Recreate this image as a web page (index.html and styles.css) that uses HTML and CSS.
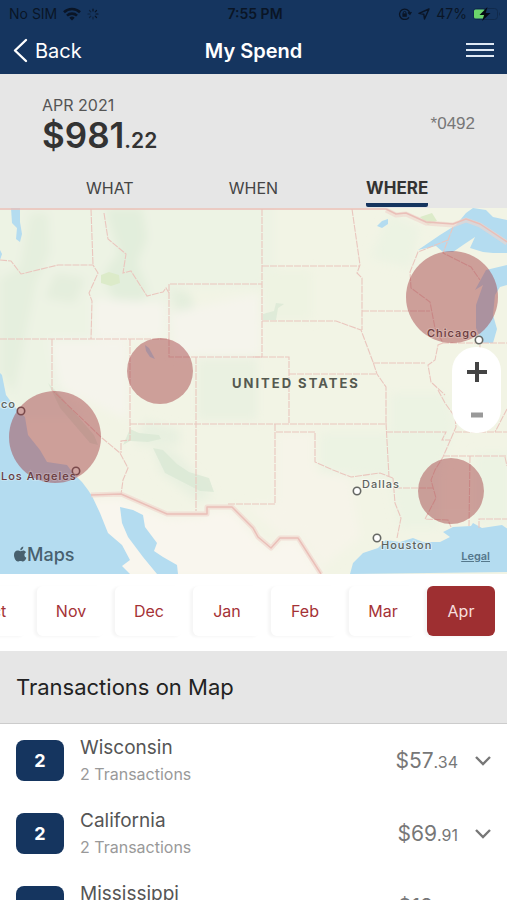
FILE: index.html
```html
<!DOCTYPE html>
<html lang="en">
<head>
  <meta charset="UTF-8" />
  <meta name="viewport" content="width=device-width, initial-scale=1.0"/>
  <title>My Spend</title>
  <link rel="stylesheet" href="styles.css">
</head>
<body>
  <header class="topbar">
    <div class="status">
      <div class="status-left">
        <span>No SIM</span>
        <svg width="18" height="14" viewBox="0 0 18 14" fill="none" stroke="currentColor" stroke-width="2.6">
          <path d="M1 5.2a11.5 11.5 0 0 1 16 0M4 8.6a7.2 7.2 0 0 1 10 0"/>
          <path d="M9 13.4L6.3 10.7a3.9 3.9 0 0 1 5.4 0z" fill="currentColor" stroke="none"/>
        </svg>
        <svg class="spinner" width="12" height="12" viewBox="0 0 12 12" fill="none" stroke="currentColor" stroke-width="1.2" stroke-linecap="round">
          <path d="M6 1v2M9.5 2.5L8.2 3.8M11 6H9M9.5 9.5L8.2 8.2"/>
          <path d="M6 11V9M2.5 9.5l1.3-1.3M1 6h2M2.5 2.5l1.3 1.3" opacity=".6"/>
        </svg>
      </div>
      <span class="time">7:55 PM</span>
      <div class="status-right">
        <svg width="14" height="12" viewBox="0 0 14 12" fill="none" stroke="currentColor" stroke-width="1.3">
          <path d="M11 9.3A5.2 5.2 0 1 1 11.8 5M10 4.6l1.9 1.6L13.4 4"/>
          <rect x="4.4" y="5.4" width="4.4" height="3.4" fill="currentColor" stroke="none"/>
          <path d="M5.3 5.6V4.7a1.3 1.3 0 0 1 2.6 0v.9" stroke-width="1"/>
        </svg>
        <svg width="12" height="12" viewBox="0 0 12 12" fill="none" stroke="currentColor" stroke-width="1.4" stroke-linejoin="round">
          <path d="M11 1L1 5.4l4.8.8.7 4.8z"/>
        </svg>
        <span>47%</span>
        <svg width="28" height="14" viewBox="0 0 28 14">
          <rect x=".5" y="1.5" width="24" height="11" rx="3" fill="none" stroke="#102a4c"/>
          <path d="M26 5q2 2 0 4z" fill="#102a4c"/>
          <rect x="1" y="2.500" width="11" height="9" rx="1.5" fill="#6bd56b"/>
          <path d="M14.5 0L6.5 8h4.6l-2 6L17.5 6h-4.8z" fill="#050a12"/>
        </svg>
      </div>
    </div>
    <nav class="nav">
      <a href="#" class="back">
        <svg width="15" height="25" viewBox="0 0 15 25" fill="none" stroke="currentColor" stroke-width="2.4" stroke-linecap="round" stroke-linejoin="round"><path d="M13 2L2 12.5 13 23"/></svg>
        Back
      </a>
      <h1>My Spend</h1>
      <button class="menu" aria-label="Menu">
        <svg width="28" height="16" viewBox="0 0 28 16" stroke="currentColor" stroke-width="2"><path d="M0 1h28M0 7h28M0 13h28"/></svg>
      </button>
    </nav>
  </header>

  <section class="summary">
    <div class="total">
      <div>
        <p class="month">APR 2021</p>
        <p class="amount">$981<span>.22</span></p>
      </div>
      <span class="card">*0492</span>
    </div>
    <div class="tabs">
      <button>WHAT</button>
      <button>WHEN</button>
      <button class="active">WHERE</button>
    </div>
  </section>

  <section class="map">
    <svg class="map-art" viewBox="0 0 507 366" role="img" aria-label="Map of the United States">
      <defs>
        <filter id="soft"><feGaussianBlur stdDeviation="5"/></filter>
      </defs>
      <rect width="507" height="366" fill="#f2f4e5"/>

      <!-- terrain -->
      <g filter="url(#soft)">
        <path d="M-10 -10H275V80H170V130H100L60 180 90 210 20 210-10 170z" fill="#edf3e4"/>
        <path d="M30 5h18l2 40-14 30-10 50-12 60-14-20V70l20-10z" fill="#e5efde"/>
        <path d="M105 0h37l5 30-10 25 12 30-20 20-15-10-10-30 15-20z" fill="#e2eedc"/>
        <path d="M55 65l30 5-10 25-30-5zM170 80l20 5 10 32-25-15z" fill="#e4eedd"/>
        <path d="M197 150h60v62h-60z" fill="#eaf1e1"/>
        <path d="M145 212l35 10v15h-45zM153 238l22 5 38 45-15 6-38-30z" fill="#e8f0e0"/>
        <path d="M50 132h78v80L60 180zM93 90l72 5v35H93zM170 105l90-20v62h-85z" fill="#f5f4ec"/>
        <path d="M90 290l32 0 45 20 40-2v-6h25l22 25 18 15 10-12 16 2 26 38H90z" fill="#f9f6ee"/>
        <path d="M277 225h36v34l37 10 10 60-37 30-23-32h-20l-35-30h32z" fill="#f6f4e9"/>
        <path d="M390 185h55l10 30-15 50 0 55h-40l-10-50-70-5v-40h70z" fill="#ecf3e3"/>
        <path d="M475 245h35v70h-35zM390 5l30 15-10 40-40-10z" fill="#ecf3e3"/>
        <path d="M262 62h50v50h-50z" fill="#eef3e2"/>
      </g>
      <g fill="#dcebc9">
        <path d="M101 67l8-3 10 3 1 8-9 3-10-3z"/>
        <path d="M420 9l12-4 5 8-9 4z"/>
      </g>
      <g fill="#dbe9d6" opacity=".8">
        <path d="M48 175l10 10 36 42 4 10-8-2-30-35z"/>
        <path d="M130 221l9 4 20 2 2 4-13 3-18-1-7 4z"/>
        <path d="M153 240l10 2 14 14 12 8 20 6 5 14-14-1-35-18z"/>
        <path d="M263 106l11-3 2-8 8 1-6 4-2 12h-13z"/>
      </g>

      <!-- water -->
      <g fill="#b4dcf0">
        <path d="M0 165L2 167 6 187 15 199 25 209 28 227 40 242 47 254 67 257 73 265 82 274 88 282 92 288 100 305 108 325 122 337 130 352 122 358 130 366H0z"/>
        <path d="M120 299L133 302 143 307 145 319 157 335 154 343 163 349 177 357 178 366H157L143 349 128 329 122 315z"/>
        <path d="M11 0h9v14l2 12-2 8-4-3 1-11-5-5zM0 42l2 4-2 6z"/>
        <path d="M350 366l3-11 10-10 15-5 8-8 14 2 13-4 10 4 17 0 10-5-7-5 10-5 18-1 2-3 9 5 20-3 7 5v42z"/>
        <path d="M418 42l22-15 16-10 10-12 7-5 13 2 7 7 14 3v33h-14l-10-1-13-4 5-11-12 8-10 7h-10l-7-6z"/>
        <path d="M507 57l-21 5-11 20 8-5-7 20v23l7 15h10l4-14-4-14 2-20 5-8 7-2z"/>
        <path d="M377 18l5-5 6-2 0 5-6 4z"/>
        <path d="M145 137l4 3 6 11-5-2-4-6z"/>
      </g>

      <!-- state lines -->
      <g fill="none" stroke="#eac6be" stroke-width="1.1" stroke-dasharray="7 1">
        <path d="M0 52l11 1 10 13 37-9h35l5 8-9 20 3 8-1 38M91 1l2 56"/>
        <path d="M104 5l4 26 18 15-3 19 8-2 16 25 16-4 3-4 3 5M169 131V76h93M169 131v18h93M0 131h169"/>
        <path d="M52 131v51l50 48 18 15 8 15-5 12-2 15M130 131v101l-9 1v12M130 216h256M196 149v154"/>
        <path d="M262 1v148M262 58h98M352 1l8 56-3 8 5 5v52M362 103h68M262 113h74l25 9 12 32 4 12 9 13v36"/>
        <path d="M373 155h52M253 149h36v66M289 166h88"/>
        <path d="M228 296h47v-80M276 224h39v30l18 8 18 7 29-4 13 5M386 215l3 54M393 270l2 25 6 15-4 20M395 280h38M386 224h60l-4 8h9"/>
        <path d="M438 182l7 13 10 14 1 10-13 30-8 13-4 10 5 18-11 21 23 1 3 7M443 248h64M455 224h52M470 248l-1 70M479 320v-9h28M505 249l2 9"/>
        <path d="M453 19l-10 26 10 5 18 9 9 13M448 32l-30 12-8 20 1 16 19 14 5 26 8 15h64M443 135l-5 2-3 15-7 5 3 17 14 13M480 137v50M507 201l-12 23"/>
      </g>
      <g fill="none" stroke-linejoin="round">
        <path d="M91 287l30-1 46 20h40v-7h25l21 21 5 9 13 11 9-10h18l23 36M386 2l10 5 10-1 20 9 27 2 13-5 14 5 27 18" stroke="#f0d3cb" stroke-width="5" opacity=".6"/>
        <path d="M0 1h386l10 5 10-1 20 9 27 2 13-5 14 5 27 18M91 287l30-1 46 20h40v-7h25l21 21 5 9 13 11 9-10h18l23 36" stroke="#eabfb8" stroke-width="1.5"/>
      </g>

      <!-- spend by state -->
      <g fill="#a23c42" opacity=".46">
        <circle cx="452" cy="89" r="46"/>
        <circle cx="160" cy="163" r="33"/>
        <circle cx="55" cy="229" r="46"/>
        <circle cx="451" cy="283" r="33"/>
      </g>

      <!-- city names -->
      <g fill="#fff" stroke="#666864" stroke-width="1.6">
        <circle cx="479" cy="132" r="3.7"/>
        <circle cx="357" cy="283" r="3.7"/>
        <circle cx="377" cy="330" r="3.7"/>
        <circle cx="76" cy="263" r="3.7" fill="#cfa4a0" stroke="#7a4a4c"/>
        <circle cx="21" cy="203" r="3.7" fill="#cfa4a0" stroke="#7a4a4c"/>
      </g>
      <g class="city">
        <text class="covered" x="427" y="129">Chicago</text>
        <text x="362" y="280">Dallas</text>
        <text x="381" y="341">Houston</text>
        <text class="covered" x="1" y="272">Los Angeles</text>
        <text x="16" y="200" text-anchor="end">San Francisco</text>
      </g>
      <text class="country" x="232" y="180">UNITED STATES</text>

      <g fill="#48606e">
        <path d="M23.2 342.6c-1 .1-2 .7-2.600.7-.8 0-1.800-.7-3-.7-2 0-3.600 1.600-3.600 4.400 0 3 2 6.500 3.800 6.500.9 0 1.500-.6 2.700-.6s1.600.6 2.600.6c1.500 0 2.800-2.200 3.300-3.700-2.400-1-2.700-4.400-.3-5.600-.8-1.100-1.900-1.600-2.900-1.600z"/>
        <path d="M20.300 342.300c-.2-1.900 1.300-3.500 3-3.700.2 2-1.300 3.700-3 3.700z"/>
        <text class="brand" x="27" y="353">Maps</text>
      </g>
    </svg>
    <div class="zoom">
      <button aria-label="Zoom in"><svg width="20" height="20" viewBox="0 0 20 20" stroke="#444" stroke-width="4"><path d="M0 10h20M10 0v20"/></svg></button>
      <button aria-label="Zoom out"><svg width="12" height="20" viewBox="0 0 12 20" stroke="#999" stroke-width="5"><path d="M0 10h12"/></svg></button>
    </div>
    <a href="#" class="legal">Legal</a>
  </section>

  <div class="months">
    <button>Oct</button>
    <button>Nov</button>
    <button>Dec</button>
    <button>Jan</button>
    <button>Feb</button>
    <button>Mar</button>
    <button class="active">Apr</button>
  </div>

  <h2 class="list-title">Transactions on Map</h2>

  <ul class="list">
    <li>
      <span class="count">2</span>
      <div class="place"><h3>Wisconsin</h3><p>2 Transactions</p></div>
      <span class="sum">$57<small>.34</small></span>
      <button aria-label="Show Wisconsin"><svg width="16" height="10" viewBox="0 0 16 10" fill="none" stroke="currentColor" stroke-width="2.4"><path d="M1 1l7 7 7-7"/></svg></button>
    </li>
    <li>
      <span class="count">2</span>
      <div class="place"><h3>California</h3><p>2 Transactions</p></div>
      <span class="sum">$69<small>.91</small></span>
      <button aria-label="Show California"><svg width="16" height="10" viewBox="0 0 16 10" fill="none" stroke="currentColor" stroke-width="2.4"><path d="M1 1l7 7 7-7"/></svg></button>
    </li>
    <li>
      <span class="count">1</span>
      <div class="place"><h3>Mississippi</h3><p>1 Transaction</p></div>
      <span class="sum">$18<small>.40</small></span>
      <button aria-label="Show Mississippi"><svg width="16" height="10" viewBox="0 0 16 10" fill="none" stroke="currentColor" stroke-width="2.4"><path d="M1 1l7 7 7-7"/></svg></button>
    </li>
  </ul>
</body>
</html>
```
FILE: styles.css
```css
* {
  margin: 0;
  padding: 0;
  box-sizing: border-box;
  font-family: 'Inter', sans-serif;
}

body {
  height: 100vh;
  display: flex;
  flex-direction: column;
  background: #fff;
  color: #333;
  overflow: hidden;
}

body > * {
  flex-shrink: 0;
}

button {
  border: none;
  background: none;
  cursor: pointer;
}

svg {
  display: block;
}

/* Top bar */
.topbar {
  background: #15355f;
  color: #fff;
}

.status,
.nav {
  display: grid;
  grid-template-columns: 1fr auto 1fr;
  align-items: center;
}

.status {
  height: 27px;
  padding: 0 6px 0 9px;
  font-size: 14px;
  color: #0a1526;
}

.status-left,
.status-right {
  display: flex;
  align-items: center;
  gap: 6px;
}

.status-right {
  justify-content: flex-end;
}

.time {
  font-weight: 600;
}

.nav {
  height: 47px;
  padding: 0 13px;
}

.back {
  display: flex;
  align-items: center;
  gap: 7px;
  font-size: 20px;
  color: #fff;
  text-decoration: none;
}

h1 {
  font-size: 20px;
  font-weight: 600;
}

.menu {
  justify-self: end;
  color: #dfe9f5;
}

/* Month total and tabs */
.summary {
  padding: 22px 0 0;
  background: #e6e6e6;
}

.total {
  display: flex;
  justify-content: space-between;
  align-items: center;
  height: 56px;
  padding: 0 32px 0 42px;
}

.month {
  margin-top: 8px;
  font-size: 16px;
  line-height: 20px;
  color: #555;
}

.amount {
  font-size: 35px;
  line-height: 40px;
  font-weight: 600;
}

.amount span {
  font-size: 21px;
}

.card {
  font-family: 'Liberation Sans', sans-serif;
  font-size: 17px;
  color: #777;
}

.tabs {
  display: grid;
  grid-template-columns: repeat(3, 1fr);
  justify-items: center;
  margin-top: 20px;
  padding: 0 38px 1px;
}

.tabs button {
  height: 35px;
  border-bottom: 4px solid transparent;
  font-size: 16px;
  color: #444;
}

.tabs .active {
  border-color: #15355f;
  border-radius: 0 0 2px 2px;
  font-size: 17px;
  font-weight: 700;
  color: #333;
}

/* Map */
.map {
  position: relative;
}

.map-art {
  width: 100%;
  height: auto;
}

.city {
  font-size: 11px;
  font-weight: 500;
  letter-spacing: 1px;
  fill: #5d625c;
  paint-order: stroke;
  stroke: rgba(255, 255, 255, 0.5);
  stroke-width: 2px;
}

.covered {
  fill: #6b3c3f;
  stroke: rgba(255, 255, 255, 0.2);
}

.country {
  font-size: 13px;
  font-weight: 700;
  letter-spacing: 2px;
  fill: #555950;
}

.brand {
  font-size: 18px;
  font-weight: 500;
}

.zoom {
  position: absolute;
  top: 139px;
  right: 6px;
  width: 49px;
  display: flex;
  flex-direction: column;
  border-radius: 24px;
  background: #fff;
}

.zoom button {
  height: 43px;
  display: flex;
  align-items: center;
  justify-content: center;
  padding-top: 6px;
}

.legal {
  position: absolute;
  right: 17px;
  bottom: 11px;
  font-size: 11px;
  font-weight: 600;
  color: #55788c;
}

/* Month picker */
.months {
  display: flex;
  justify-content: flex-end;
  gap: 10px;
  padding: 12px 12px 15px;
  overflow: hidden;
}

.months button {
  flex: 0 0 68px;
  height: 50px;
  border-radius: 6px;
  background: #fff;
  box-shadow: -3px 1px 3px rgba(0, 0, 0, 0.04);
  font-size: 16px;
  color: #a53236;
}

.months .active {
  background: #9e2f31;
  color: #f7dede;
}

/* Transactions */
.list-title {
  padding: 0 16px;
  border-bottom: 1px solid #ccc;
  background: #e6e6e6;
  font-size: 22px;
  font-weight: 400;
  line-height: 72px;
  color: #222;
}

.list {
  flex: 1;
  min-height: 0;
  overflow: hidden;
  list-style: none;
}

.list li {
  display: flex;
  align-items: center;
  height: 73px;
  padding: 0 16px;
}

.count {
  width: 48px;
  height: 41px;
  border-radius: 8px;
  background: #15355f;
  color: #fff;
  font-size: 18px;
  font-weight: 700;
  line-height: 41px;
  text-align: center;
}

.place {
  flex: 1;
  margin-left: 16px;
}

.place h3 {
  font-size: 19px;
  font-weight: 400;
  line-height: 26px;
  color: #555;
}

.place p {
  font-size: 16px;
  line-height: 26px;
  color: #999;
}

.sum {
  font-size: 21px;
  color: #777;
}

.sum small {
  font-size: 16px;
}

.list button {
  margin-left: 17px;
  color: #777;
}
```
